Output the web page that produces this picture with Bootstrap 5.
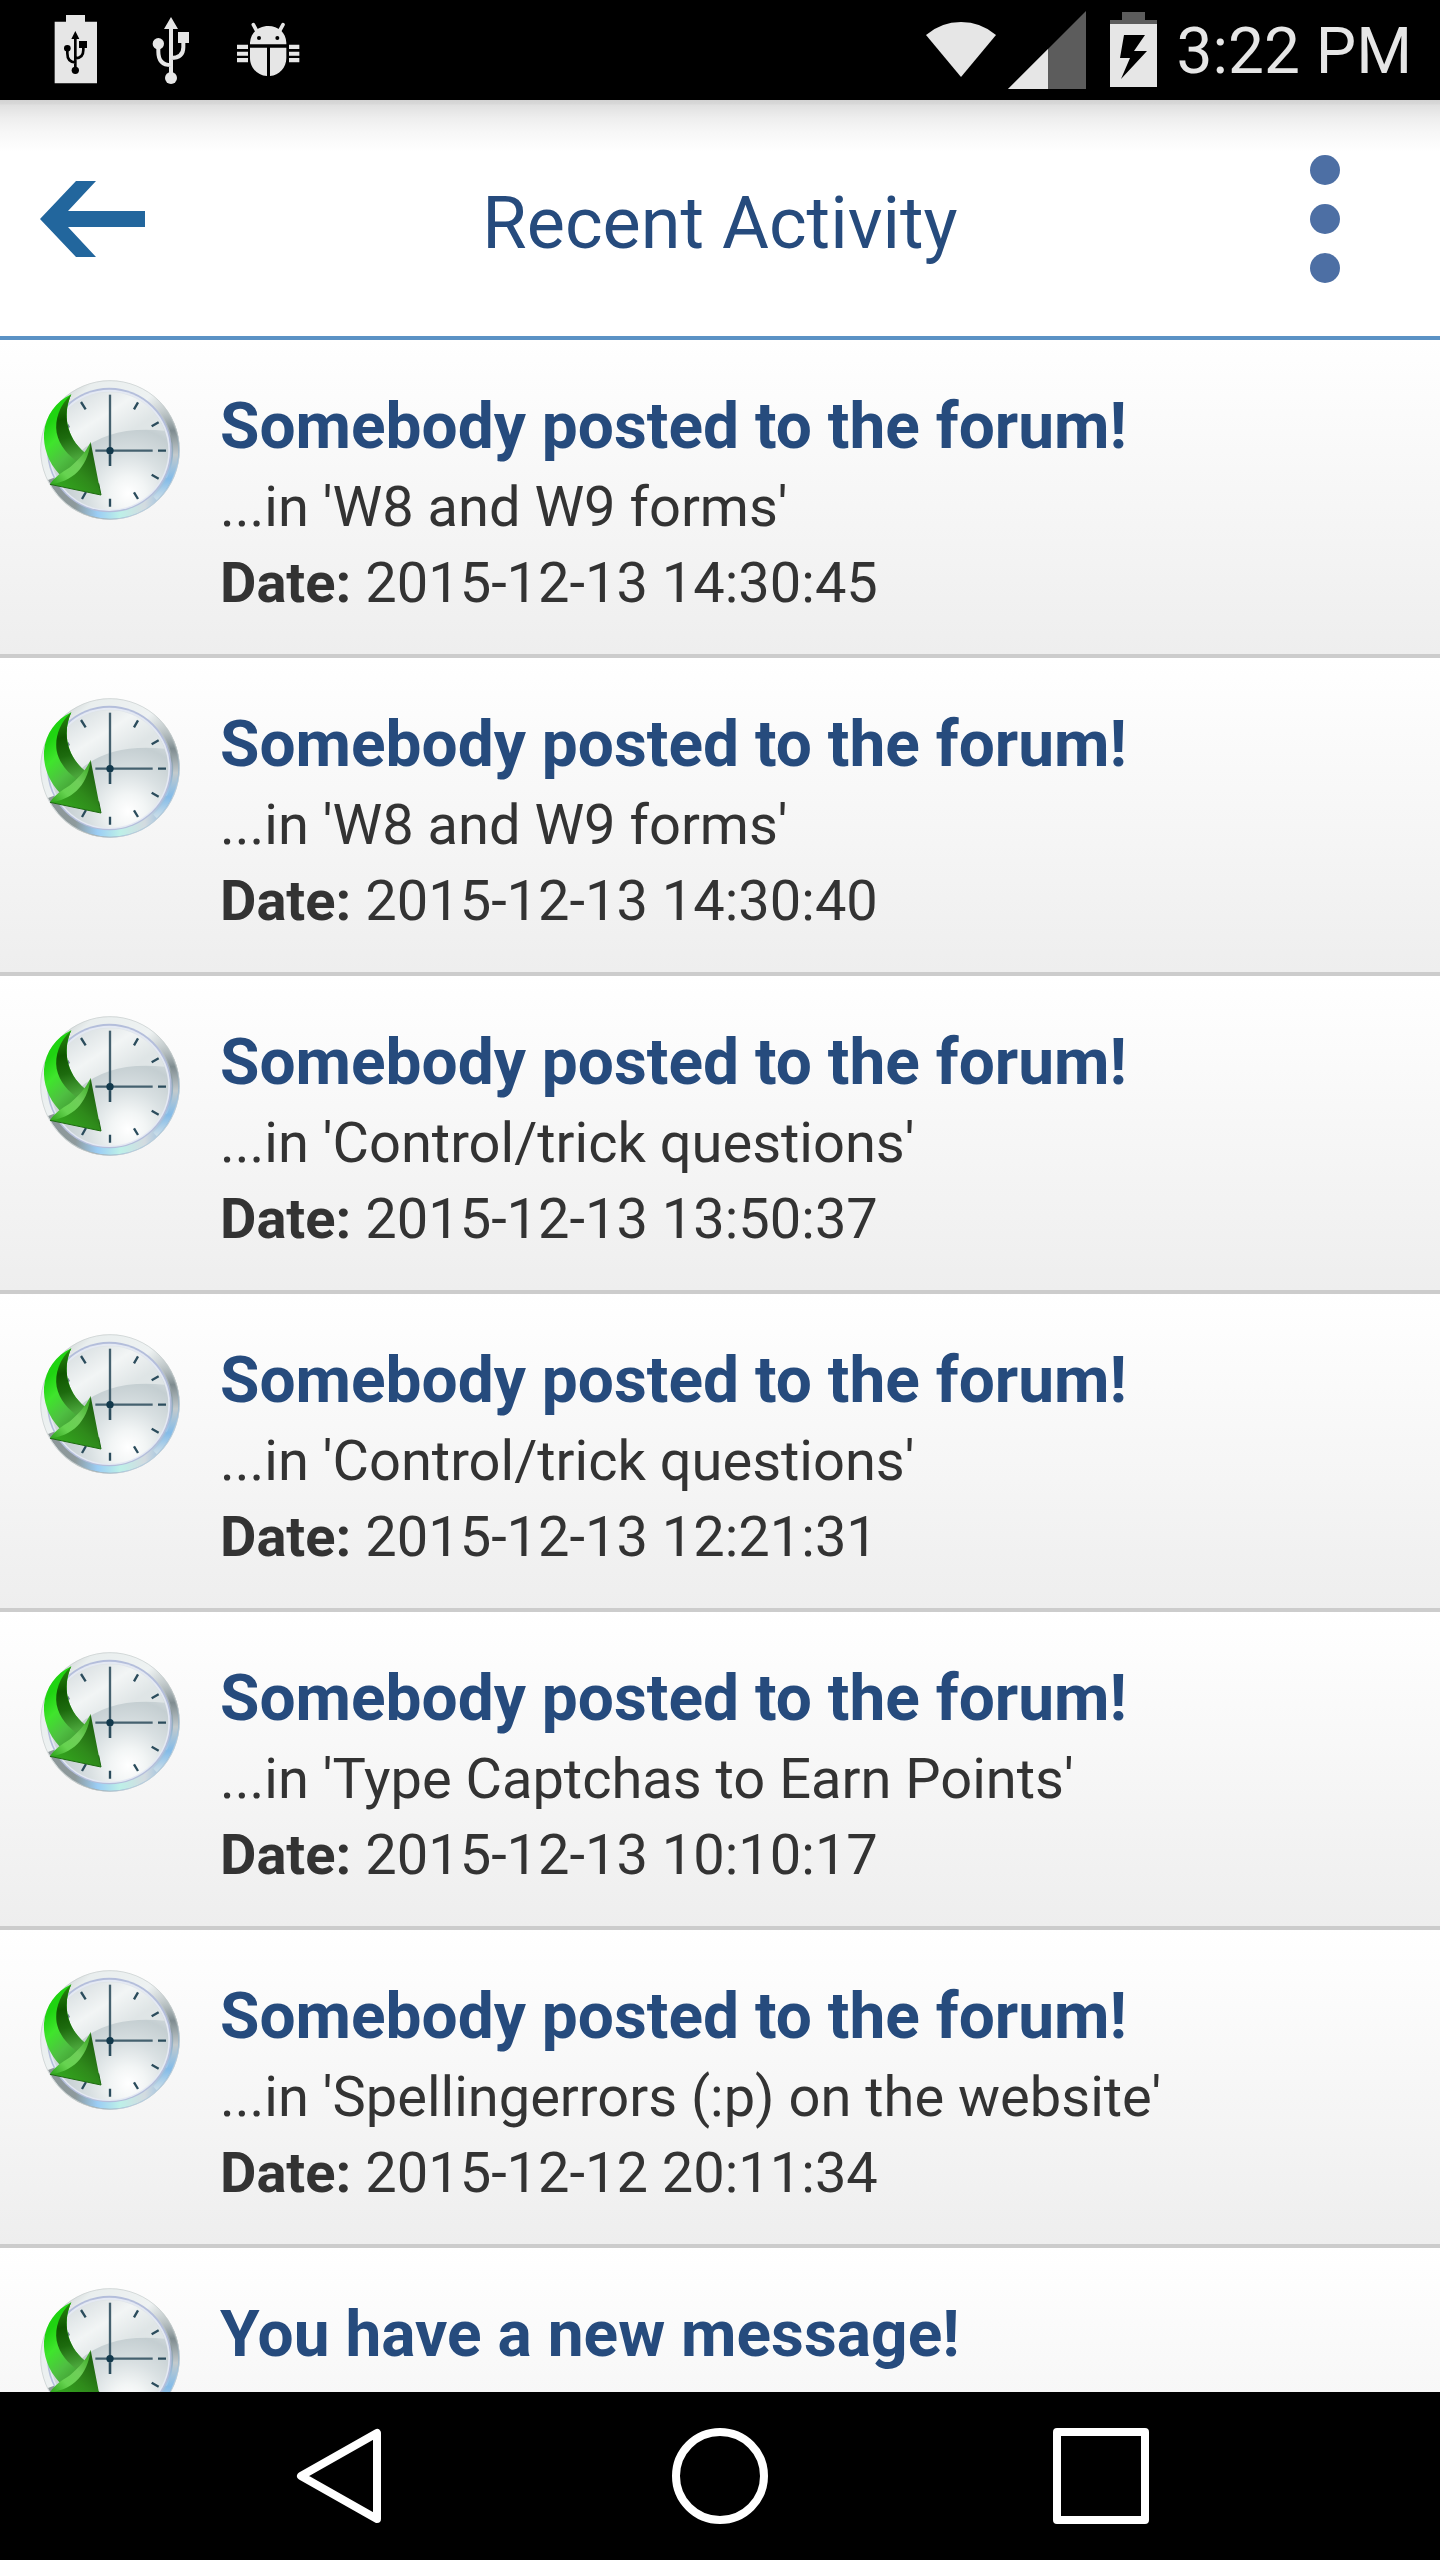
<!DOCTYPE html>
<html lang="en">
<head>
<meta charset="utf-8">
<meta name="viewport" content="width=device-width, initial-scale=1">
<title>Recent Activity</title>
<link href="https://cdn.jsdelivr.net/npm/bootstrap@5.3.0/dist/css/bootstrap.min.css" rel="stylesheet">
<style>
  body { font-family: Roboto, "Liberation Sans", sans-serif; color: #333; }
  .status-bar { height: 100px; padding: 0 28px; background: #000; color: #e6e6e6; font-size: 64px; line-height: 76px; }
  .status-bar svg { height: 100px; display: block; }
  .app-header { height: 240px; padding: 2px 40px 0; border-bottom: 4px solid #5b92c5;
    background: linear-gradient(#d3d3d3 0, #d8d8d8 4px, #e0e0e0 5px, #eee 18px, #f7f7f7 32px, #fff 52px); }
  .app-header .btn { width: 150px; height: 130px; }
  .app-header svg { display: block; }
  .app-title { font-size: 72px; line-height: 84px; color: #264b7d; padding-top: 10px; }
  .list-group-flush > .activity { padding: 40px 40px 33px; gap: 40px; border-width: 0 0 4px; border-color: #ccc; color: #333;
    background: linear-gradient(#fff, #eee); font-size: 56px; line-height: 76px; }
  .activity svg { width: 140px; height: 140px; }
  .activity-text { padding-top: 5px; }
  .activity-title { font-size: 64px; line-height: 84px; color: #264b7d; }
  .system-nav { height: 168px; padding: 0 20.2%; background: #000; }
  .system-nav svg { width: 96px; height: 96px; display: block; }
</style>
</head>
<body class="vh-100 overflow-hidden d-flex flex-column bg-white">

<svg class="position-absolute" width="0" height="0" aria-hidden="true">
  <defs>
    <linearGradient id="rim" x1="0" y1="0" x2="1" y2="1">
      <stop offset="0" stop-color="#a9b0b0"/><stop offset=".2" stop-color="#e9eeee"/><stop offset=".45" stop-color="#eef2f2"/>
      <stop offset=".68" stop-color="#8f9c9f"/><stop offset=".8" stop-color="#9cc6ea"/><stop offset="1" stop-color="#dfe9ea"/>
    </linearGradient>
    <linearGradient id="rimLow" x1="0" y1="0" x2="1" y2="0">
      <stop offset="0" stop-color="#8c9698"/><stop offset=".22" stop-color="#8e9a9c"/><stop offset=".4" stop-color="#9bcdf5"/>
      <stop offset=".58" stop-color="#bdf0e8"/><stop offset=".78" stop-color="#d3dbe0"/><stop offset="1" stop-color="#82b4de"/>
    </linearGradient>
    <linearGradient id="rimRight" x1="0" y1="0" x2="0" y2="1">
      <stop offset="0" stop-color="#e2e6e6" stop-opacity="0"/><stop offset=".3" stop-color="#7f8c90"/><stop offset=".55" stop-color="#c3cacc"/>
      <stop offset=".8" stop-color="#83bbe8"/><stop offset="1" stop-color="#c8dce8"/>
    </linearGradient>
    <radialGradient id="face" gradientUnits="userSpaceOnUse" cx="325" cy="400" r="260">
      <stop offset="0" stop-color="#fff"/><stop offset=".2" stop-color="#f2f5f5"/><stop offset=".45" stop-color="#d9e0e2"/>
      <stop offset=".75" stop-color="#c4ced1"/><stop offset="1" stop-color="#dde3e5"/>
    </radialGradient>
    <linearGradient id="gloss" gradientUnits="userSpaceOnUse" x1="200" y1="100" x2="290" y2="240">
      <stop offset="0" stop-color="#dce2e4"/><stop offset=".5" stop-color="#f2f5f5"/><stop offset="1" stop-color="#dfe5e6"/>
    </linearGradient>
    <linearGradient id="arrowOuter" gradientUnits="userSpaceOnUse" x1="75" y1="200" x2="190" y2="320">
      <stop offset="0" stop-color="#1fd411"/><stop offset=".3" stop-color="#3fe52c"/><stop offset=".65" stop-color="#4fbf42"/><stop offset="1" stop-color="#3f9a30"/>
    </linearGradient>
    <linearGradient id="arrowInner" gradientUnits="userSpaceOnUse" x1="130" y1="110" x2="180" y2="290">
      <stop offset="0" stop-color="#27890f"/><stop offset=".35" stop-color="#0f5600"/><stop offset=".65" stop-color="#1d6b0e"/><stop offset="1" stop-color="#4aa53a"/>
    </linearGradient>
    <linearGradient id="arrowHead" gradientUnits="userSpaceOnUse" x1="130" y1="390" x2="225" y2="290">
      <stop offset="0" stop-color="#32a51d"/><stop offset=".5" stop-color="#2f8a1b"/><stop offset="1" stop-color="#1f6410"/>
    </linearGradient>
    <linearGradient id="arrowFold" gradientUnits="userSpaceOnUse" x1="90" y1="370" x2="212" y2="250">
      <stop offset="0" stop-color="#2fa51c"/><stop offset=".3" stop-color="#66d350"/><stop offset=".6" stop-color="#6fce59"/><stop offset="1" stop-color="#35a31f"/>
    </linearGradient>
  </defs>
  <symbol id="clock" viewBox="60 60 420 420">
    <circle cx="270" cy="270" r="209" fill="url(#rim)"/>
    <path d="M84 360A207 207 0 0 0 456 360L430 350A180 180 0 0 1 110 350Z" fill="url(#rimLow)"/>
    <path d="M400 125A195 195 0 0 1 405 415" fill="none" stroke="url(#rimRight)" stroke-width="15"/>
    <circle cx="270" cy="270" r="208" fill="none" stroke="#c5cccc" stroke-width="2"/>
    <circle cx="268" cy="270" r="187" fill="#b4bedb"/>
    <circle cx="268" cy="271" r="182" fill="#e4e9f3"/>
    <circle cx="268" cy="272" r="177" fill="url(#face)"/>
    <path d="M93 300A177 177 0 0 1 434 212Q270 195 180 275Q130 315 93 300Z" fill="url(#gloss)"/>
    <g stroke="#2b4c5c" stroke-width="7">
      <path d="M183 126L197 148M354 127L342 148M416 187L395 199M438 272H414M416 356L395 344M354 417L342 397M270 440V416M186 417L198 396"/>
      <path d="M142 194L147 203" stroke="#6f818d"/>
      <path d="M270 104V318" stroke="#45616f"/><path d="M226 272H398" stroke="#45616f"/>
      <path d="M270 285V318"/>
    </g>
    <circle cx="270" cy="272" r="11" fill="#12394c"/>
    <path d="M154 103C132 150 132 218 185 270L208 290L150 345L120 345C82 305 70 260 72 220C77 165 108 125 154 103Z" fill="url(#arrowOuter)"/>
    <path d="M154 103C118 135 104 180 110 218C118 258 145 285 172 305L208 290L185 270C132 218 132 150 154 103Z" fill="url(#arrowInner)"/>
    <path d="M212 246L243 405L90 373C150 350 195 310 212 246Z" fill="url(#arrowHead)"/>
    <path d="M212 246C195 280 175 300 150 322C125 338 105 350 90 373C155 366 202 325 212 246Z" fill="url(#arrowFold)"/>
    <path d="M90 373L243 405L236 370" fill="none" stroke="#1d6a10" stroke-width="3"/>
  </symbol>
</svg>

<div class="status-bar d-flex align-items-center flex-shrink-0">
  <svg width="96" viewBox="84 0 288 300" role="img" aria-label="Battery over USB">
    <path fill="#e6e6e6" d="M164 65H198V45H255V65H291V250H164Z"/>
    <path fill="#000" d="M226 93L238 117H214ZM237 123H261V144H237Z"/>
    <circle cx="202" cy="145" r="10"/><circle cx="226" cy="211" r="11"/>
    <path d="M226 112V205M202 150V160Q202 187 226 187M250 142V150Q250 175 226 175" fill="none" stroke="#000" stroke-width="8"/>
  </svg>
  <svg width="96" viewBox="372 0 288 300" role="img" aria-label="USB connected">
    <g fill="#e6e6e6"><path d="M513 51L534 87H492ZM534 96H567V129H534Z"/><circle cx="475" cy="131" r="17"/><circle cx="513" cy="234" r="18"/></g>
    <path d="M513 80V225M475 140V155Q475 195 513 195M550 125V142Q550 174 513 174" fill="none" stroke="#e6e6e6" stroke-width="12"/>
  </svg>
  <svg width="96" viewBox="660 0 288 300" role="img" aria-label="USB debugging">
    <g fill="#e6e6e6">
      <path d="M750 133V128C752 98 775 78 805 78S858 98 859 128V133ZM750 143H801V228C772 226 750 203 750 174ZM810 143H859V174C859 203 838 226 810 228Z"/>
      <path d="M711 134H744V147H711ZM711 155H744V167H711ZM711 174H744V187H711ZM867 134H898V147H867ZM867 155H898V167H867ZM867 174H898V187H867Z"/>
    </g>
    <path d="M760 74L771 94M849 74L838 94" stroke="#e6e6e6" stroke-width="11" stroke-linecap="round"/>
    <circle cx="777" cy="114" r="6"/><circle cx="832" cy="114" r="6"/>
  </svg>
  <div class="ms-auto d-flex align-items-center">
    <svg width="82" viewBox="925 0 82 100" role="img" aria-label="Wi-Fi"><path fill="#e6e6e6" d="M925 35Q940 22 960 22T995 35L960 77Z"/></svg>
    <svg width="102" viewBox="1007 0 102 100" role="img" aria-label="Mobile signal"><path fill="#5c5c5c" d="M1007 89L1085 11V89Z"/><path fill="#e6e6e6" d="M1007 89L1047 49V89Z"/></svg>
    <svg width="66" viewBox="1109 0 66 100" role="img" aria-label="Battery charging"><path fill="#5c5c5c" d="M1109 20H1121V12H1144V20H1156V24H1109Z"/><path fill="#e6e6e6" d="M1109 24H1156V87H1109Z"/><path fill="#000" d="M1123 35H1144L1133 51H1146L1120 79L1129 58H1119Z"/></svg>
    <time class="pt-1" datetime="15:22">3:22 PM</time>
  </div>
</div>

<header class="app-header d-flex align-items-center justify-content-between flex-shrink-0">
  <button type="button" class="btn border-0 p-0" aria-label="Back">
    <svg width="105" height="76" viewBox="0 0 105 76"><path fill="#22669d" d="M0 38L36 0H56L28 30H105V46H28L56 76H36Z"/></svg>
  </button>
  <h1 class="app-title fw-normal m-0">Recent Activity</h1>
  <button type="button" class="btn border-0 p-0" aria-label="More options">
    <svg class="mx-auto" width="32" height="130" viewBox="0 0 32 130"><g fill="#4d6fa4"><circle cx="16" cy="16" r="15"/><circle cx="16" cy="65" r="15"/><circle cx="16" cy="114" r="15"/></g></svg>
  </button>
</header>

<main class="flex-grow-1 overflow-hidden">
  <div class="list-group list-group-flush">
    <a href="#" class="list-group-item activity d-flex align-items-start">
      <svg class="flex-shrink-0" aria-hidden="true"><use href="#clock"/></svg>
      <div class="activity-text"><div class="activity-title fw-bold">Somebody posted to the forum!</div><div>...in 'W8 and W9 forms'</div><div><b>Date:</b> 2015-12-13 14:30:45</div></div>
    </a>
    <a href="#" class="list-group-item activity d-flex align-items-start">
      <svg class="flex-shrink-0" aria-hidden="true"><use href="#clock"/></svg>
      <div class="activity-text"><div class="activity-title fw-bold">Somebody posted to the forum!</div><div>...in 'W8 and W9 forms'</div><div><b>Date:</b> 2015-12-13 14:30:40</div></div>
    </a>
    <a href="#" class="list-group-item activity d-flex align-items-start">
      <svg class="flex-shrink-0" aria-hidden="true"><use href="#clock"/></svg>
      <div class="activity-text"><div class="activity-title fw-bold">Somebody posted to the forum!</div><div>...in 'Control/trick questions'</div><div><b>Date:</b> 2015-12-13 13:50:37</div></div>
    </a>
    <a href="#" class="list-group-item activity d-flex align-items-start">
      <svg class="flex-shrink-0" aria-hidden="true"><use href="#clock"/></svg>
      <div class="activity-text"><div class="activity-title fw-bold">Somebody posted to the forum!</div><div>...in 'Control/trick questions'</div><div><b>Date:</b> 2015-12-13 12:21:31</div></div>
    </a>
    <a href="#" class="list-group-item activity d-flex align-items-start">
      <svg class="flex-shrink-0" aria-hidden="true"><use href="#clock"/></svg>
      <div class="activity-text"><div class="activity-title fw-bold">Somebody posted to the forum!</div><div>...in 'Type Captchas to Earn Points'</div><div><b>Date:</b> 2015-12-13 10:10:17</div></div>
    </a>
    <a href="#" class="list-group-item activity d-flex align-items-start">
      <svg class="flex-shrink-0" aria-hidden="true"><use href="#clock"/></svg>
      <div class="activity-text"><div class="activity-title fw-bold">Somebody posted to the forum!</div><div>...in 'Spellingerrors (:p) on the website'</div><div><b>Date:</b> 2015-12-12 20:11:34</div></div>
    </a>
    <a href="#" class="list-group-item activity d-flex align-items-start">
      <svg class="flex-shrink-0" aria-hidden="true"><use href="#clock"/></svg>
      <div class="activity-text"><div class="activity-title fw-bold">You have a new message!</div><div>&nbsp;</div><div>&nbsp;</div></div>
    </a>
  </div>
</main>

<nav class="system-nav d-flex align-items-center justify-content-between flex-shrink-0" aria-label="System">
  <button type="button" class="btn border-0 p-0" aria-label="Back"><svg viewBox="0 0 96 96"><path d="M10 48L86 5V91Z" fill="none" stroke="#fff" stroke-width="8" stroke-linejoin="round"/></svg></button>
  <button type="button" class="btn border-0 p-0" aria-label="Home"><svg viewBox="0 0 96 96"><circle cx="48" cy="48" r="44" fill="none" stroke="#fff" stroke-width="8"/></svg></button>
  <button type="button" class="btn border-0 p-0" aria-label="Overview"><svg viewBox="0 0 96 96"><rect x="4" y="4" width="88" height="88" fill="none" stroke="#fff" stroke-width="8" stroke-linejoin="round"/></svg></button>
</nav>

<script src="https://cdn.jsdelivr.net/npm/bootstrap@5.3.0/dist/js/bootstrap.bundle.min.js"></script>
</body>
</html>
